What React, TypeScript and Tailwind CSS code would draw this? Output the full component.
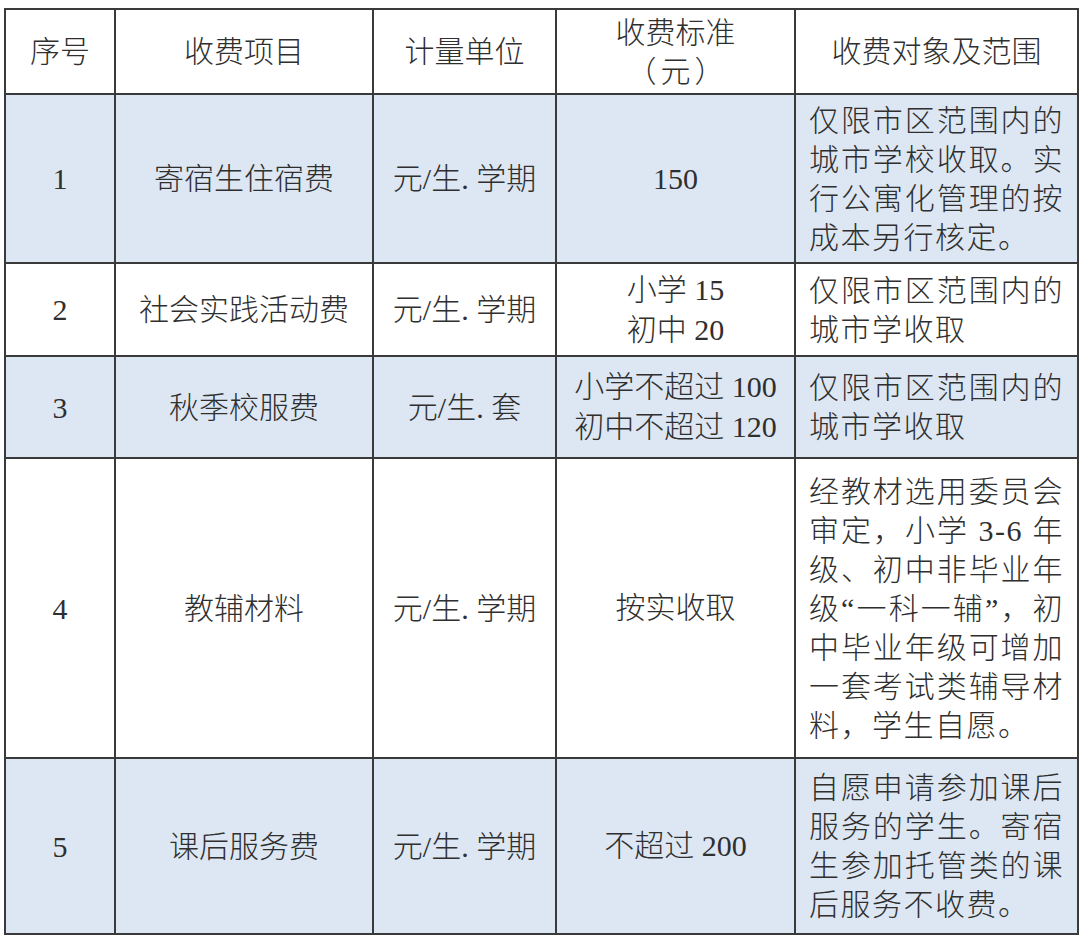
import React from "react";

const FONT = { fontFamily: '"Liberation Serif", "Noto Sans CJK SC", serif' };

type Row = {
  no: string;
  item: string;
  unit: string;
  std: string[];
  scope: string[];
  blue: boolean;
  h: string;
};

const rows: Row[] = [
  {
    no: "1",
    item: "寄宿生住宿费",
    unit: "元/生. 学期",
    std: ["150"],
    scope: ["仅限市区范围内的", "城市学校收取。实", "行公寓化管理的按", "成本另行核定。"],
    blue: true,
    h: "h-[167px]",
  },
  {
    no: "2",
    item: "社会实践活动费",
    unit: "元/生. 学期",
    std: ["小学 15", "初中 20"],
    scope: ["仅限市区范围内的", "城市学收取"],
    blue: false,
    h: "h-[91px]",
  },
  {
    no: "3",
    item: "秋季校服费",
    unit: "元/生. 套",
    std: ["小学不超过 100", "初中不超过 120"],
    scope: ["仅限市区范围内的", "城市学收取"],
    blue: true,
    h: "h-[100px]",
  },
  {
    no: "4",
    item: "教辅材料",
    unit: "元/生. 学期",
    std: ["按实收取"],
    scope: [
      "经教材选用委员会",
      "审定，小学 3-6 年",
      "级、初中非毕业年",
      "级“一科一辅”，初",
      "中毕业年级可增加",
      "一套考试类辅导材",
      "料，学生自愿。",
    ],
    blue: false,
    h: "h-[298px]",
  },
  {
    no: "5",
    item: "课后服务费",
    unit: "元/生. 学期",
    std: ["不超过 200"],
    scope: ["自愿申请参加课后", "服务的学生。寄宿", "生参加托管类的课", "后服务不收费。"],
    blue: true,
    h: "h-[174px]",
  },
];

function Cell({
  children,
  blue,
  h,
  left,
}: {
  children: React.ReactNode;
  blue: boolean;
  h: string;
  left?: boolean;
}) {
  return (
    <div
      className={`${h} flex flex-col justify-center ${
        left ? "items-stretch pl-[13px] pr-[13px]" : "items-center text-center"
      } ${blue ? "bg-[#dde7f3]" : "bg-white"}`}
    >
      {children}
    </div>
  );
}

export default function App() {
  return (
    <div
      className="w-[1080px] h-[945px] bg-white pt-[8px] pl-[4px] text-[#2f2f2f] [text-spacing-trim:space-all]"
      style={FONT}
    >
      <div className="inline-grid grid-cols-[108px_256px_181px_237px_281px] gap-[2px] p-[2px] bg-[#3a3a3a] text-[30px] leading-[39px] font-light">
        {/* header */}
        <Cell blue={false} h="h-[83px]">
          <div>序号</div>
        </Cell>
        <Cell blue={false} h="h-[83px]">
          <div>收费项目</div>
        </Cell>
        <Cell blue={false} h="h-[83px]">
          <div>计量单位</div>
        </Cell>
        <Cell blue={false} h="h-[83px]">
          <div>收费标准</div>
          <div className="flex items-center">
            <span className="mr-[4px]">（</span>
            <span>元</span>
            <span className="ml-[4px]">）</span>
          </div>
        </Cell>
        <Cell blue={false} h="h-[83px]">
          <div>收费对象及范围</div>
        </Cell>

        {rows.map((r) => (
          <React.Fragment key={r.no}>
            <Cell blue={r.blue} h={r.h}>
              <div>{r.no}</div>
            </Cell>
            <Cell blue={r.blue} h={r.h}>
              <div>{r.item}</div>
            </Cell>
            <Cell blue={r.blue} h={r.h}>
              <div>{r.unit}</div>
            </Cell>
            <Cell blue={r.blue} h={r.h}>
              {r.std.map((s) => (
                <div key={s} className="leading-[40px]">
                  {s}
                </div>
              ))}
            </Cell>
            <Cell blue={r.blue} h={r.h} left>
              {r.scope.map((s, i) => (
                <div
                  key={s}
                  className={`tracking-[1.5px] whitespace-nowrap ${
                    i < r.scope.length - 1 ? "text-justify [text-align-last:justify]" : "text-left"
                  }`}
                >
                  {s}
                </div>
              ))}
            </Cell>
          </React.Fragment>
        ))}
      </div>
    </div>
  );
}
